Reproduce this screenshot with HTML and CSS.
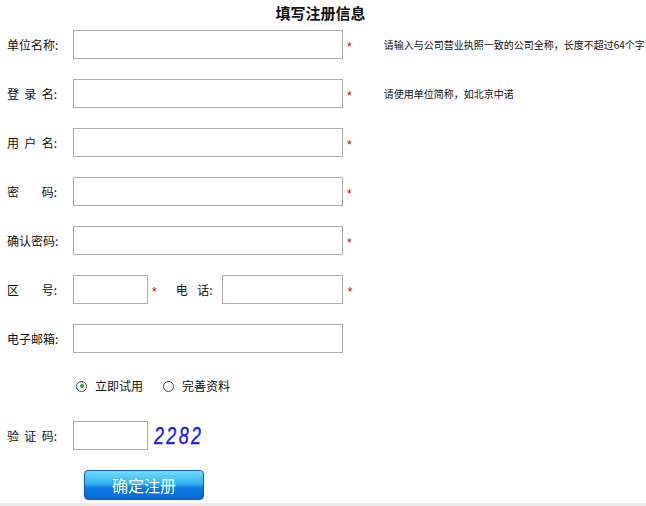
FILE: index.html
```html
<!DOCTYPE html>
<html lang="zh-CN">
<head>
<meta charset="utf-8">
<title>填写注册信息</title>
<link rel="stylesheet" href="styles.css">
</head>
<body>
<div class="page">
  <h1 class="title">填写注册信息</h1>
  <form class="form">
    <div class="row">
      <label class="lbl">单位名称:</label>
      <input class="ipt wide" type="text">
      <span class="req">*</span>
      <span class="hint">请输入与公司营业执照一致的公司全称，长度不超过64个字</span>
    </div>
    <div class="row">
      <label class="lbl spread"><span>登</span><span>录</span><span>名:</span></label>
      <input class="ipt wide" type="text">
      <span class="req">*</span>
      <span class="hint">请使用单位简称，如北京中诺</span>
    </div>
    <div class="row">
      <label class="lbl spread"><span>用</span><span>户</span><span>名:</span></label>
      <input class="ipt wide" type="text">
      <span class="req">*</span>
    </div>
    <div class="row">
      <label class="lbl spread"><span>密</span><span>码:</span></label>
      <input class="ipt wide" type="password">
      <span class="req">*</span>
    </div>
    <div class="row">
      <label class="lbl">确认密码:</label>
      <input class="ipt wide" type="password">
      <span class="req">*</span>
    </div>
    <div class="row">
      <label class="lbl spread"><span>区</span><span>号:</span></label>
      <input class="ipt short" type="text">
      <span class="req">*</span>
      <label class="lbl2 spread"><span>电</span><span>话:</span></label>
      <input class="ipt phone" type="text">
      <span class="req req-phone">*</span>
    </div>
    <div class="row">
      <label class="lbl">电子邮箱:</label>
      <input class="ipt wide" type="text">
    </div>
    <div class="radios">
      <span class="radio"><span class="circle checked"></span>立即试用</span>
      <span class="radio"><span class="circle"></span>完善资料</span>
    </div>
    <div class="row captcha-row">
      <label class="lbl spread"><span>验</span><span>证</span><span>码:</span></label>
      <input class="ipt short" type="text">
      <span class="captcha">2282</span>
    </div>
    <button class="submit" type="button">确定注册</button>
  </form>
</div>
</body>
</html>
```

FILE: styles.css
```css
html {
  background: #ecebe5;
}
body {
  margin: 0;
  background: #ffffff;
  height: 503px;
  font-family: "Noto Sans CJK SC", "Liberation Sans", sans-serif;
  font-size: 12px;
  color: #111;
}
.page {
  width: 646px;
}
.title {
  margin: 0;
  width: 641px;
  height: 30px;
  line-height: 26px;
  text-align: center;
  font-size: 15px;
  font-weight: bold;
  color: #111;
}
.form {
  margin: 0;
  display: flex;
  flex-direction: column;
}
.row {
  display: flex;
  align-items: center;
  height: 29px;
  margin-bottom: 20px;
}
.lbl {
  box-sizing: border-box;
  flex: none;
  width: 73px;
  padding-left: 7px;
  padding-right: 16px;
  white-space: nowrap;
  line-height: 14px;
}
.spread {
  display: flex;
  justify-content: space-between;
}
.lbl2 {
  flex: none;
  width: 37px;
  margin-left: 19px;
  margin-right: 9px;
  white-space: nowrap;
  line-height: 14px;
}
.ipt {
  box-sizing: border-box;
  flex: none;
  height: 29px;
  margin: 0;
  padding: 0 3px;
  border: 1px solid #acacac;
  background: #fff;
  font-size: 12px;
  outline: none;
}
.wide { width: 270px; }
.short { width: 75px; }
.phone { width: 121px; }
.req {
  color: #c00000;
  font-family: "Liberation Sans", sans-serif;
  font-size: 12px;
  margin-left: 4px;
  padding-top: 5px;
  line-height: 12px;
}
.req-phone { margin-left: 5px; }
.hint {
  margin-left: 32px;
  font-size: 10px;
  line-height: 12px;
  color: #111;
  white-space: nowrap;
}
.radios {
  display: flex;
  align-items: center;
  height: 20px;
  margin-top: 3px;
  padding-left: 76px;
  margin-bottom: 25px;
}
.radio {
  display: flex;
  align-items: center;
  gap: 8px;
  margin-right: 20px;
  line-height: 14px;
}
.circle {
  box-sizing: border-box;
  width: 11px;
  height: 11px;
  border: 1px solid #2d4f78;
  border-radius: 50%;
  background: #fff;
  display: flex;
  align-items: center;
  justify-content: center;
}
.circle.checked::after {
  content: "";
  width: 4px;
  height: 4px;
  border-radius: 50%;
  background: #22a822;
}
.captcha-row {
  margin-bottom: 20px;
}
.captcha {
  display: inline-block;
  margin-left: 6px;
  font-family: "Liberation Sans", sans-serif;
  font-style: italic;
  font-size: 23px;
  letter-spacing: 3px;
  color: #1a1aee;
  line-height: 22px;
  transform: scaleX(0.78);
  transform-origin: left center;
  -webkit-text-stroke: 0.4px #1a1aee;
}
.submit {
  margin: 0 0 0 84px;
  width: 120px;
  height: 30px;
  padding: 0;
  border: 1px solid #0a5cc0;
  border-radius: 4px;
  background: linear-gradient(#72dcfd 0%, #34b4f2 45%, #0b7ae4 60%, #0a66d6 100%);
  color: #fff;
  font-family: "Noto Sans CJK SC", sans-serif;
  font-size: 16px;
  line-height: 28px;
  cursor: pointer;
}
```
